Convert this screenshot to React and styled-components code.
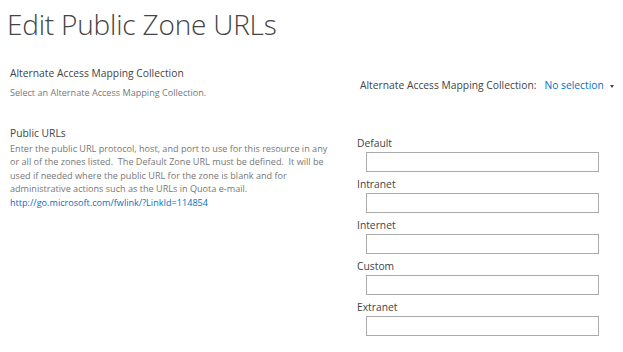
import React from 'react';
import styled, { createGlobalStyle } from 'styled-components';

const Global = createGlobalStyle`
  body {
    margin: 0;
    background: #fff;
    font-family: "Open Sans", "Noto Sans", sans-serif;
  }
`;

const Page = styled.div`
  width: 623px;
  height: 352px;
  overflow: hidden;
  padding: 4px 0 0 7px;
  box-sizing: border-box;
`;

const Title = styled.h1`
  margin: 0;
  font-size: 28px;
  font-weight: 300;
  color: #444;
  line-height: 40px;
  letter-spacing: -0.2px;
`;

const Section = styled.div`
  display: grid;
  grid-template-columns: 350px 1fr;
  padding-top: ${p => p.$top}px;
`;

const Info = styled.div`
  padding-left: 3px;
`;

const Heading = styled.div`
  font-size: 10.3px;
  color: #444;
  line-height: 14px;
  margin-bottom: ${p => p.$gap}px;
`;

const Desc = styled.div`
  font-size: 9.1px;
  color: #777;
  line-height: 13.6px;
  white-space: nowrap;
`;

const Link = styled.a`
  color: #0072c6;
  text-decoration: none;
  display: block;
`;

const Control = styled.div`
  padding-top: ${p => p.$top}px;
`;

const Picker = styled.div`
  display: flex;
  align-items: center;
  font-size: 10.3px;
  color: #444;
  padding-left: 3px;
`;

const Selection = styled.span`
  color: #0072c6;
  margin-left: 8px;
  display: flex;
  align-items: center;
`;

const Caret = styled.span`
  width: 0;
  height: 0;
  border-left: 2.5px solid transparent;
  border-right: 2.5px solid transparent;
  border-top: 3px solid #444;
  margin-left: 6px;
  margin-top: 2px;
`;

const Zones = styled.div`
  display: flex;
  flex-direction: column;
`;

const Zone = styled.label`
  display: block;
  font-size: 10.3px;
  color: #444;
  line-height: 14px;
  height: 41px;
`;

const Input = styled.input`
  display: block;
  box-sizing: border-box;
  width: 233px;
  height: 20px;
  margin: 2px 0 0 9px;
  border: 1px solid #ababab;
  outline: none;
  background: #fff;
`;

const zones = ['Default', 'Intranet', 'Internet', 'Custom', 'Extranet'];

const App = () => (
  <Page>
    <Global />
    <Title>Edit Public Zone URLs</Title>
    <Section $top={22}>
      <Info>
        <Heading $gap={6}>Alternate Access Mapping Collection</Heading>
        <Desc>Select an Alternate Access Mapping Collection.</Desc>
      </Info>
      <Control $top={12}>
        <Picker>
          Alternate Access Mapping Collection:
          <Selection>
            No selection
            <Caret />
          </Selection>
        </Picker>
      </Control>
    </Section>
    <Section $top={26}>
      <Info>
        <Heading $gap={2}>Public URLs</Heading>
        <Desc>
          Enter the public URL protocol, host, and port to use for this resource in any
          <br />
          or all of the zones listed.&nbsp; The Default Zone URL must be defined.&nbsp; It will be
          <br />
          used if needed where the public URL for the zone is blank and for
          <br />
          administrative actions such as the URLs in Quota e-mail.
          <Link href="#">http://go.microsoft.com/fwlink/?LinkId=114854</Link>
        </Desc>
      </Info>
      <Control $top={10}>
        <Zones>
          {zones.map(z => (
            <Zone key={z}>
              {z}
              <Input type="text" />
            </Zone>
          ))}
        </Zones>
      </Control>
    </Section>
  </Page>
);

export default App;
